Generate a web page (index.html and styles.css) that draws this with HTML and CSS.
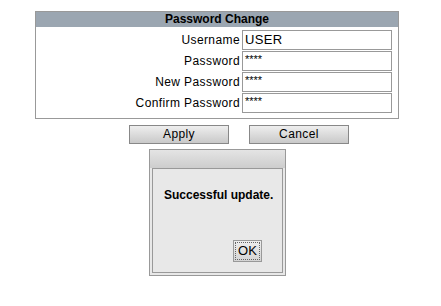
FILE: index.html
```html
<!DOCTYPE html>
<html>
<head>
<meta charset="utf-8">
<link rel="stylesheet" href="styles.css">
</head>
<body>
<div class="panel">
  <div class="panel-head">Password Change</div>
  <div class="form">
    <div class="row"><span class="label">Username</span><div class="field">USER</div></div>
    <div class="row"><span class="label">Password</span><div class="field pw">****</div></div>
    <div class="row"><span class="label">New Password</span><div class="field pw">****</div></div>
    <div class="row"><span class="label">Confirm Password</span><div class="field pw">****</div></div>
  </div>
</div>
<div class="actions">
  <div class="btn">Apply</div>
  <div class="btn">Cancel</div>
</div>
<div class="dialog">
  <div class="dialog-title"></div>
  <div class="dialog-body">
    <div class="msg">Successful update.</div>
    <div class="dialog-foot"><div class="ok"><span class="ok-inner">OK</span></div></div>
  </div>
</div>
</body>
</html>
```
FILE: styles.css
```css
html, body { margin: 0; padding: 0; background: #fff; }
body { font-family: "Liberation Sans", Arial, sans-serif; font-size: 12px; color: #000; }
.panel { margin: 11px 0 0 35px; width: 362px; border: 1px solid #999; border-top: none; padding-bottom: 5px; }
.panel-head { background: #9ba6b1; border-top: 1px solid #999; height: 15px; line-height: 15px; text-align: center; font-weight: bold; font-size: 12px; }
.form { display: flex; flex-direction: column; gap: 1px; padding-top: 3px; }
.row { display: flex; align-items: center; justify-content: flex-end; gap: 2px; padding-right: 6px; }
.label { font-size: 12px; letter-spacing: 0.4px; }
.field { width: 146px; height: 18px; border: 1px solid #999; padding-left: 2px; line-height: 18px; font-size: 13px; letter-spacing: 0.3px; box-sizing: content-box; }
.field.pw { font-size: 11px; line-height: 14px; letter-spacing: 0; }
.actions { display: flex; gap: 20px; margin: 6px 0 0 129px; }
.btn { width: 98px; height: 17px; border: 1px solid #888; background: linear-gradient(#eee, #c9c9c9); text-align: center; line-height: 17px; font-size: 12px; letter-spacing: 0.4px; }
.dialog { margin: 5px 0 0 149px; width: 135px; height: 125px; border: 1px solid #999; background: #e8e8e8; display: flex; flex-direction: column; }
.dialog-title { height: 18px; background: linear-gradient(#e4e4e4, #cdcdcd); }
.dialog-body { flex: 1; margin: 0 2px 2px 2px; border: 1px solid #999; background: #e8e8e8; display: flex; flex-direction: column; }
.msg { font-weight: bold; font-size: 12px; padding: 19px 0 0 11px; }
.dialog-foot { margin-top: auto; display: flex; justify-content: flex-end; padding: 0 20px 10px 0; }
.ok { width: 27px; height: 20px; border: 1px solid #999; background: linear-gradient(#eee, #d4d4d4); display: flex; align-items: center; justify-content: center; }
.ok-inner { border: 1px dotted #666; padding: 1px 2px; line-height: 14px; font-size: 13px; }
```
